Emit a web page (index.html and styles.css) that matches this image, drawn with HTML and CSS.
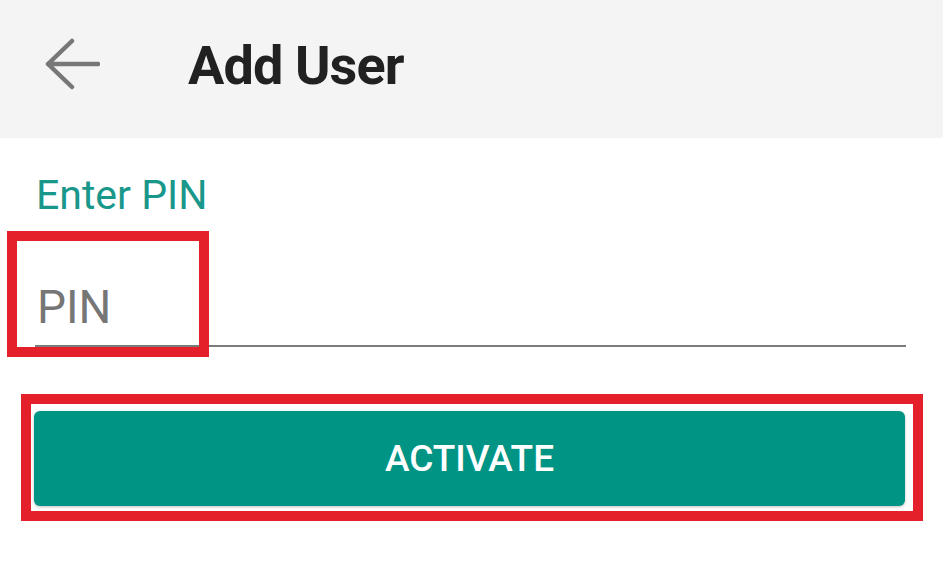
FILE: index.html
```html
<!DOCTYPE html>
<html lang="en">
<head>
  <meta charset="UTF-8">
  <meta name="viewport" content="width=device-width, initial-scale=1.0">
  <title>Add User</title>
  <link rel="stylesheet" href="styles.css">
</head>
<body>
  <header class="toolbar">
    <svg class="back" width="56" height="52" viewBox="0 0 56 52" aria-hidden="true">
      <path d="M4 26 H54 M28 3 L4 26 L28 49" fill="none" stroke="#777" stroke-width="4.5" stroke-linecap="round" stroke-linejoin="round"/>
    </svg>
    <h1>Add User</h1>
  </header>

  <main class="form">
    <label class="field-label" for="pin">Enter PIN</label>
    <div class="field">
      <input id="pin" type="text" placeholder="PIN">
      <span class="mark mark-pin"></span>
    </div>
    <div class="action">
      <button>ACTIVATE</button>
      <span class="mark mark-btn"></span>
    </div>
  </main>
</body>
</html>
```

FILE: styles.css
```css
body {
  margin: 0;
  padding: 0;
  font-family: Roboto, "Liberation Sans", sans-serif;
  background: #fff;
}

.toolbar {
  display: flex;
  align-items: center;
  height: 138px;
  padding-left: 44px;
  background: #f4f4f4;
  box-sizing: border-box;
}

.toolbar .back {
  display: block;
  margin-top: -10px;
}

.toolbar h1 {
  margin: -7px 0 0 88px;
  font-size: 54px;
  font-weight: 700;
  letter-spacing: -0.9px;
  line-height: 64px;
  color: #212121;
}

.form {
  padding: 33px 37px 40px 35px;
}

.field-label {
  display: block;
  font-size: 41px;
  line-height: 48px;
  color: #18978a;
  padding-left: 1px;
}

.field {
  position: relative;
  margin-top: 31px;
}

.field input {
  display: block;
  width: 100%;
  box-sizing: border-box;
  padding: 30px 2px 11px;
  font-family: inherit;
  font-size: 46px;
  line-height: 54px;
  height: 97px;
  border: none;
  border-bottom: 2px solid #7b7b7b;
  outline: none;
  background: transparent;
  color: #333;
}

.field input::placeholder {
  color: #767676;
}

.action {
  position: relative;
  margin-top: 64px;
  height: 95px;
}

.action button {
  display: block;
  width: 100%;
  height: 95px;
  margin-left: -1px;
  border: none;
  border-radius: 6px;
  background: #009485;
  color: #fff;
  font-family: inherit;
  font-size: 37px;
  font-weight: 500;
  box-shadow: 0 1px 3px rgba(0, 0, 0, 0.25);
}

.mark {
  position: absolute;
  box-sizing: border-box;
  border: 10px solid #e4202a;
  pointer-events: none;
}

.mark-pin {
  left: -28px;
  top: -19px;
  width: 202px;
  height: 126px;
}

.mark-btn {
  left: -14px;
  top: -17px;
  width: 902px;
  height: 127px;
}
```
